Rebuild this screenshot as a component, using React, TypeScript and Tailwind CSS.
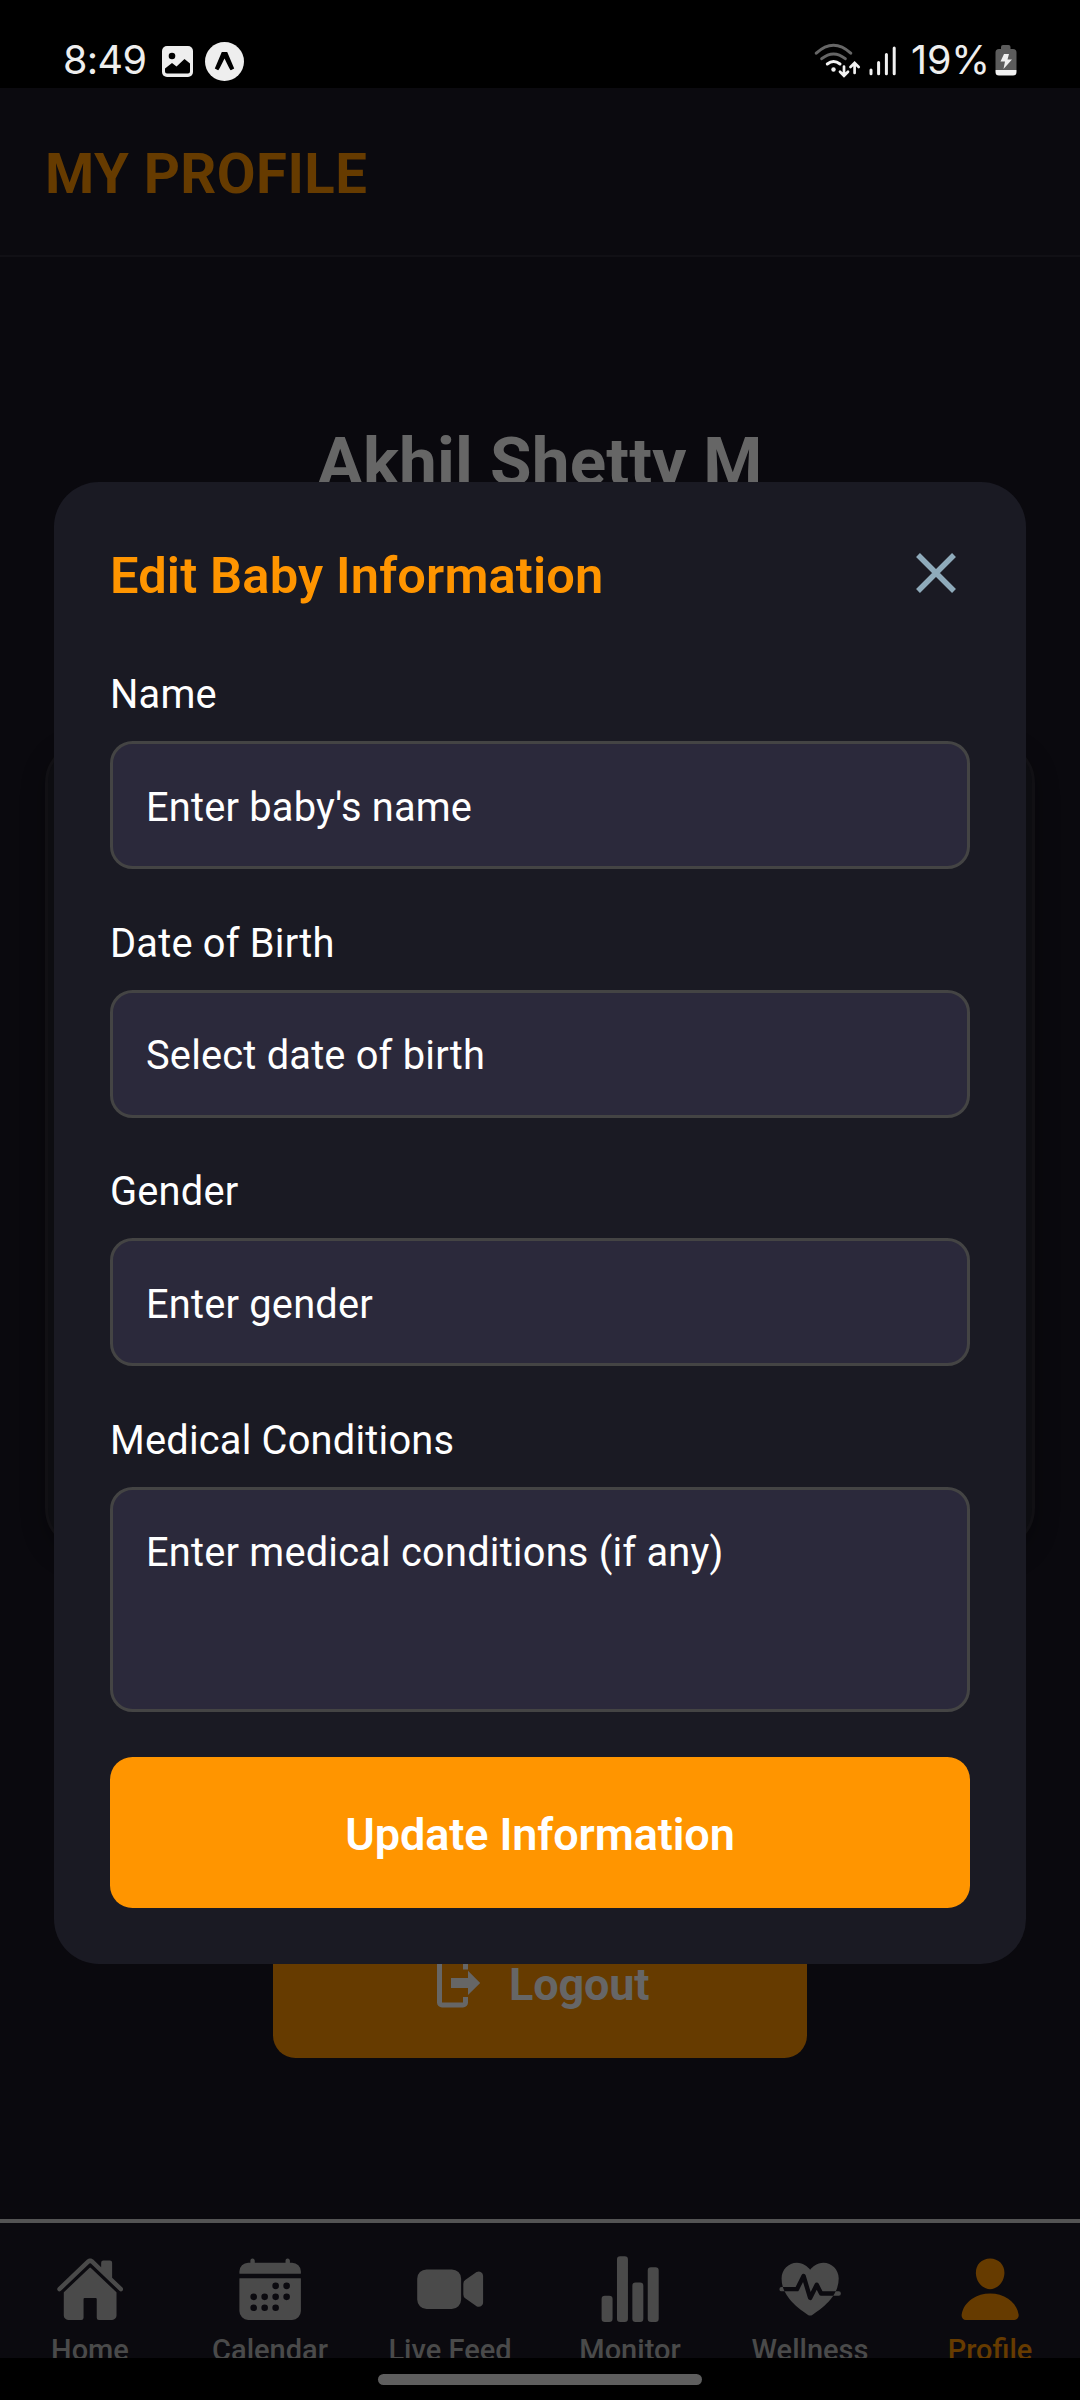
import type { ReactNode } from "react";
import {
  IoCalendar,
  IoFitness,
  IoHome,
  IoPerson,
  IoStatsChart,
  IoVideocam,
} from "react-icons/io5";

function StatusBar() {
  return (
    <div className="flex h-[88px] shrink-0 items-start justify-between bg-black text-[#eeeeee]">
      <div className="flex pt-[36px] pl-[63px]">
        <span className="w-[99px] font-['Inter',sans-serif] text-[39.500px] leading-[48px] font-[370] tracking-[-0.600px]">8:49</span>
        <svg className="mt-[10px] h-[31px] w-[31px]" viewBox="0 0 31 31">
          <rect width="31" height="31" rx="5" fill="#eee" />
          <circle cx="10" cy="10" r="3.3" fill="#000" />
          <path d="M3 22.5 10 17l4.5 3.5L22.500 13 28 17.500V25.500a2 2 0 0 1-2 2H5a2 2 0 0 1-2-2Z" fill="#000" />
        </svg>
        <svg className="mt-[6px] ml-[12px] h-[39px] w-[39px]" viewBox="0 0 39 39">
          <circle cx="19.500" cy="19.500" r="19.500" fill="#eee" />
          <path d="M16.800 10h5.400l7 16.500-3.300 1.800c-1.500-1-4.500-8.300-6.400-11.800-1.900 3.500-4.900 10.800-6.400 11.800l-3.300-1.800Z" fill="#000" />
        </svg>
      </div>
      <div className="flex pt-[36px] pr-[63px]">
        <svg className="mt-[6px] h-[36px] w-[84px]" viewBox="0 0 84 36" fill="none" strokeLinecap="round">
          <g stroke="#666" strokeWidth="3">
            <path d="M4.300 11.200Q21.500-4.600 38.700 11.200" />
            <path d="M9.700 16.700Q21.500 7.200 33.300 16.700" />
          </g>
          <g stroke="#f2f2f2" strokeWidth="3">
            <path d="M15.300 22Q21.500 17 28 22" />
            <path d="M32 24.500V33M28 29.800l4 4 4-4M42.600 31V21.800M38.500 25l4.100-4 4.100 4" strokeWidth="2.700" />
            <path d="M59 28v3.800M66.600 20.500v11.300M74.400 12.500v19.300M82.200 6v25.800" />
          </g>
          <circle cx="21.500" cy="27.500" r="2.200" fill="#eee" />
        </svg>
        <span className="ml-[15px] w-[84px] font-['Inter',sans-serif] text-[39.500px] leading-[48px] font-[370] tracking-[-0.100px]">19%</span>
        <svg className="mt-[8px] h-[32px] w-[22px]" viewBox="0 0 22 32">
          <path d="M6 5V3a2 2 0 0 1 2-2h5.500a2 2 0 0 1 2 2v2H18a3.500 3.500 0 0 1 3.500 3.500V26H.5V8.500A3.500 3.500 0 0 1 4 5Z" fill="#5c5c5c" />
          <path d="M.5 26h21v2a3.500 3.500 0 0 1-3.500 3.500H4A3.500 3.500 0 0 1 .5 28Z" fill="#f2f2f2" />
          <path d="M9 10h5l-1.500 5.500H17L8.500 25l1.500-7.500H5.500Z" fill="#eee" />
        </svg>
      </div>
    </div>
  );
}

function LogoutIcon() {
  return (
    <svg className="h-[49px] w-[44px]" viewBox="0 0 44 49">
      <path
        d="M28.500 10.500V5a2.500 2.500 0 0 0-2.500-2.500H5A2.500 2.500 0 0 0 2.500 5v38.500A2.500 2.500 0 0 0 5 46h21a2.500 2.500 0 0 0 2.500-2.500V38"
        fill="none"
        stroke="#666"
        strokeWidth="5"
      />
      <path d="M14 19h17v-7.200l12.200 12.200L31 36v-7H14Z" fill="#666" />
    </svg>
  );
}

function NavItem({ icon, label, active }: { icon: ReactNode; label: string; active?: boolean }) {
  return (
    <div
      className={`flex h-[112px] w-[180px] flex-col items-center text-[70.300px] ${active ? "text-[#663b00]" : "text-[#4a4a4a]"}`}
    >
      <div className="flex shrink-0">{icon}</div>
      <span className="mt-[9px] text-[29px] leading-[34px] font-medium whitespace-nowrap">{label}</span>
    </div>
  );
}

function Field({ label, placeholder, tall }: { label: string; placeholder: string; tall?: boolean }) {
  return (
    <div className="mb-[45px] flex flex-col">
      <span className="mb-[19.900px] pt-[2.760px] text-[39.800px] leading-[53px] tracking-[0.200px] text-white">{label}</span>
      <div
        className={`rounded-[22.500px] border-[3px] border-[#444] bg-[#2b293b] px-[33px] pt-[37.500px] text-[39.800px] leading-[52px] tracking-[0.200px] text-white ${
          tall ? "h-[225px]" : "h-[128px]"
        }`}
      >
        {placeholder}
      </div>
    </div>
  );
}

function EditBabyModal() {
  return (
    <div className="absolute inset-x-0 top-[88px] bottom-[42px] flex items-center justify-center">
      <div className="flex h-[1482px] w-[972px] flex-col rounded-[45px] bg-[#1a1a23] px-[56px] pt-[56px]">
        <div className="mb-[58.400px] flex h-[69px] items-center justify-between">
          <h2 className="pt-[6px] text-[50.625px] leading-[60px] font-semibold tracking-[0.150px] text-[#ff9500]">Edit Baby Information</h2>
          <svg className="mt-[1px] mr-[14px] h-[40px] w-[40px]" viewBox="0 0 40 40" stroke="#8fabbb" strokeWidth="5.500">
            <path d="M2 2l36 36M38 2L2 38" />
          </svg>
        </div>
        <Field label="Name" placeholder="Enter baby's name" />
        <Field label="Date of Birth" placeholder="Select date of birth" />
        <Field label="Gender" placeholder="Enter gender" />
        <Field label="Medical Conditions" placeholder="Enter medical conditions (if any)" tall />
        <button className="h-[151px] shrink-0 rounded-[22.500px] bg-[#ff9500] pt-[4px] text-[45px] font-semibold tracking-[-0.100px] text-white">
          Update Information
        </button>
      </div>
    </div>
  );
}

export default function App() {
  return (
    <div className="relative flex h-[2400px] w-[1080px] flex-col overflow-hidden bg-[#0a090e] font-['Roboto',sans-serif]">
      <StatusBar />
      <header className="flex h-[169px] shrink-0 items-center border-b-2 border-[#111015] bg-[#0b0a0f] px-[45px]">
        <h1 className="pt-[4px] text-[56.250px] leading-[66px] font-bold tracking-[0.450px] text-[#663b00]">MY PROFILE</h1>
      </header>
      <main className="flex h-[1962px] shrink-0 flex-col items-center">
        <h2 className="mt-[165px] text-[67.500px] leading-[80px] font-bold tracking-[0.150px] text-[#666]">Akhil Shetty M</h2>
        <div className="mt-[239px] h-[809px] w-[990px] rounded-[42px] border-3 border-[#111014] bg-[#0d0d11] shadow-[0_8px_24px_rgba(0,0,0,0.3)]" />
        <button className="mt-[358px] flex h-[150px] w-[534px] items-center rounded-[22.500px] bg-[#663b00] pl-[164px] text-[45px] font-bold text-[#666]">
          <LogoutIcon />
          <span className="ml-[28px] pt-[3px] tracking-[-0.150px]">Logout</span>
        </button>
      </main>
      <nav className="flex h-[139px] shrink-0 overflow-hidden border-t-4 border-[#545454] bg-[#0b0a0f] pt-[31px]">
        <NavItem icon={<IoHome />} label="Home" />
        <NavItem icon={<IoCalendar />} label="Calendar" />
        <NavItem icon={<IoVideocam />} label="Live Feed" />
        <NavItem icon={<IoStatsChart />} label="Monitor" />
        <NavItem icon={<IoFitness />} label="Wellness" />
        <NavItem icon={<IoPerson />} label="Profile" active />
      </nav>
      <div className="flex h-[42px] shrink-0 justify-center bg-black pt-[16px]">
        <div className="h-[11px] w-[324px] rounded-full bg-[#5e5e5e]" />
      </div>
      <EditBabyModal />
    </div>
  );
}
